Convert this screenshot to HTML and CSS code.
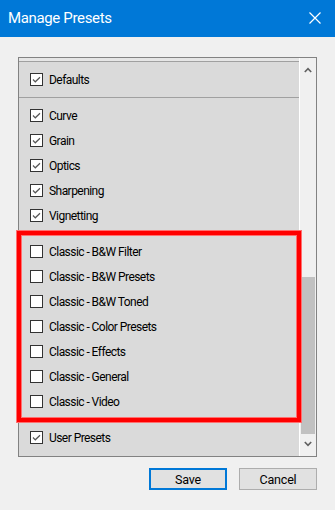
FILE: index.html
```html
<!DOCTYPE html>
<html>
<head>
<meta charset="utf-8">
<link rel="stylesheet" href="styles.css">
</head>
<body>
<div class="window">
  <div class="titlebar">
    <span class="title">Manage Presets</span>
    <svg class="close" width="12" height="12" viewBox="0 0 12 12"><path d="M0.5 0.5 L11.5 11.5 M11.5 0.5 L0.5 11.5" stroke="#fff" stroke-width="1.2" fill="none"/></svg>
  </div>
  <div class="body">
    <div class="listbox">
      <div class="list">
        <div class="stub"></div>
        <div class="section">
          <div class="row"><span class="cb checked"><svg width="13" height="13" viewBox="0 0 13 13"><path d="M3 6.5 L5.3 8.8 L10 4.2" stroke="#555" stroke-width="1.2" fill="none"/></svg></span><span class="label">Defaults</span></div>
        </div>
        <div class="section">
          <div class="row"><span class="cb checked"><svg width="13" height="13" viewBox="0 0 13 13"><path d="M3 6.5 L5.3 8.8 L10 4.2" stroke="#555" stroke-width="1.2" fill="none"/></svg></span><span class="label">Curve</span></div>
          <div class="row"><span class="cb checked"><svg width="13" height="13" viewBox="0 0 13 13"><path d="M3 6.5 L5.3 8.8 L10 4.2" stroke="#555" stroke-width="1.2" fill="none"/></svg></span><span class="label">Grain</span></div>
          <div class="row"><span class="cb checked"><svg width="13" height="13" viewBox="0 0 13 13"><path d="M3 6.5 L5.3 8.8 L10 4.2" stroke="#555" stroke-width="1.2" fill="none"/></svg></span><span class="label">Optics</span></div>
          <div class="row"><span class="cb checked"><svg width="13" height="13" viewBox="0 0 13 13"><path d="M3 6.5 L5.3 8.8 L10 4.2" stroke="#555" stroke-width="1.2" fill="none"/></svg></span><span class="label">Sharpening</span></div>
          <div class="row"><span class="cb checked"><svg width="13" height="13" viewBox="0 0 13 13"><path d="M3 6.5 L5.3 8.8 L10 4.2" stroke="#555" stroke-width="1.2" fill="none"/></svg></span><span class="label">Vignetting</span></div>
        </div>
        <div class="section">
          <div class="row"><span class="cb"></span><span class="label">Classic - B&amp;W Filter</span></div>
          <div class="row"><span class="cb"></span><span class="label">Classic - B&amp;W Presets</span></div>
          <div class="row"><span class="cb"></span><span class="label">Classic - B&amp;W Toned</span></div>
          <div class="row"><span class="cb"></span><span class="label">Classic - Color Presets</span></div>
          <div class="row"><span class="cb"></span><span class="label">Classic - Effects</span></div>
          <div class="row"><span class="cb"></span><span class="label">Classic - General</span></div>
          <div class="row"><span class="cb"></span><span class="label">Classic - Video</span></div>
        </div>
        <div class="section last">
          <div class="row"><span class="cb checked"><svg width="13" height="13" viewBox="0 0 13 13"><path d="M3 6.5 L5.3 8.8 L10 4.2" stroke="#555" stroke-width="1.2" fill="none"/></svg></span><span class="label">User Presets</span></div>
        </div>
      </div>
      <div class="scrollbar">
        <div class="sb-up"><svg width="8" height="6" viewBox="0 0 8 6"><path d="M0.8 5 L4 1.6 L7.2 5" stroke="#606060" stroke-width="1.6" fill="none"/></svg></div>
        <div class="sb-track"><div class="sb-thumb"></div></div>
        <div class="sb-down"><svg width="8" height="6" viewBox="0 0 8 6"><path d="M0.8 1 L4 4.4 L7.2 1" stroke="#606060" stroke-width="1.6" fill="none"/></svg></div>
      </div>
    </div>
    <div class="buttons">
      <button class="btn default">Save</button>
      <button class="btn">Cancel</button>
    </div>
    <div class="highlight"></div>
  </div>
</div>
</body>
</html>
```
FILE: styles.css
```css
html, body {
  margin: 0;
  padding: 0;
}
body {
  width: 335px;
  height: 510px;
  background: #f0f0f0;
  font-family: Roboto, "Noto Sans", "Liberation Sans", sans-serif;
  overflow: hidden;
}
.window {
  width: 335px;
  height: 510px;
  display: flex;
  flex-direction: column;
}
.titlebar {
  height: 37px;
  background: #0078d7;
  display: flex;
  align-items: center;
  justify-content: space-between;
  padding: 0 14px 0 8px;
  box-sizing: border-box;
}
.title {
  color: #fff;
  font-size: 15px;
  letter-spacing: -0.35px;
  line-height: 1;
}
.close {
  display: block;
  margin-top: -1px;
}
.body {
  position: relative;
  padding: 20px 18px 0 18px;
  flex: 1;
}
.listbox {
  width: 299px;
  height: 400px;
  box-sizing: border-box;
  border: 1px solid #828282;
  display: flex;
  background: #dadada;
}
.list {
  width: 281px;
  background: #dadada;
  display: flex;
  flex-direction: column;
}
.stub {
  height: 3px;
  background: #e6e6e6;
  border-bottom: 1px solid #a0a0a0;
}
.section {
  padding: 5px 0;
  border-bottom: 1px solid #a0a0a0;
}
.section.last {
  border-bottom: none;
}
.row {
  height: 25px;
  display: flex;
  align-items: center;
  padding-left: 11px;
}
.cb {
  width: 13px;
  height: 13px;
  box-sizing: border-box;
  border: 1px solid #333;
  background: #fff;
  display: flex;
  align-items: center;
  justify-content: center;
  flex: none;
}
.cb svg {
  display: block;
  margin: -1px;
}
.label {
  margin-left: 6px;
  font-size: 12px;
  letter-spacing: -0.55px;
  color: #000;
  white-space: nowrap;
}
.scrollbar {
  width: 16px;
  border-left: 1px solid #ffffff;
  background: #f0f0f0;
  display: flex;
  flex-direction: column;
}
.sb-up {
  height: 24px;
  display: flex;
  justify-content: center;
  align-items: flex-start;
  padding-top: 9px;
  box-sizing: border-box;
}
.sb-track {
  flex: 1;
  padding-top: 195px;
  box-sizing: border-box;
}
.sb-thumb {
  height: 157px;
  margin: 0 1px;
  background: #c1c1c1;
}
.sb-down {
  height: 22px;
  display: flex;
  justify-content: center;
  align-items: flex-start;
  padding-top: 7px;
  box-sizing: border-box;
}
.buttons {
  display: flex;
  justify-content: flex-end;
  gap: 12px;
  margin-top: 11px;
}
.btn {
  width: 78px;
  height: 22px;
  box-sizing: border-box;
  background: #e1e1e1;
  border: 1px solid #adadad;
  font-family: Roboto, "Noto Sans", "Liberation Sans", sans-serif;
  font-size: 12.5px;
  letter-spacing: -0.2px;
  color: #000;
  padding: 0;
  margin: 0;
}
.btn.default {
  border: 2px solid #0078d7;
}
.highlight {
  position: absolute;
  left: 17px;
  top: 194px;
  width: 284px;
  height: 191px;
  box-sizing: border-box;
  border: 4px solid #ff0000;
  box-shadow: 0 0 0 1px #ff7070, inset 0 0 0 1px #ff7070;
}
```
